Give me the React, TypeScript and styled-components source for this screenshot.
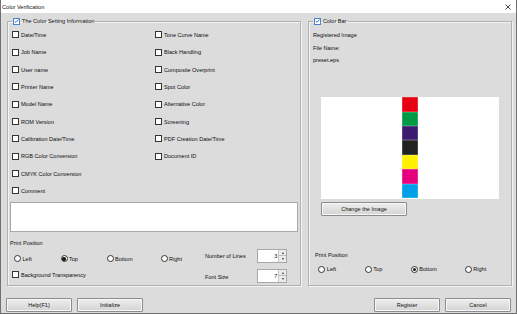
import React from 'react';
import styled, { createGlobalStyle } from 'styled-components';

const GlobalStyle = createGlobalStyle`
  html, body {
    margin: 0;
    padding: 0;
    background: #dcdcdc;
  }
  body {
    font-family: "Liberation Sans", Arial, sans-serif;
  }
`;

const Window = styled.div`
  width: 517px;
  height: 314px;
  box-sizing: border-box;
  border-left: 1px solid #707070;
  border-right: 1px solid #707070;
  border-bottom: 1px solid #707070;
  background: #dcdcdc;
  color: #0d0d0d;
  font-size: 5.55px;
  display: flex;
  flex-direction: column;
  overflow: hidden;
`;

const TitleBar = styled.div`
  flex: none;
  height: 13px;
  background: #ffffff;
  display: flex;
  align-items: center;
  justify-content: space-between;
  padding: 0 5px 0 1px;
  font-size: 5.6px;
  color: #111111;
`;

const Body = styled.div`
  flex: 1;
  display: flex;
  flex-direction: column;
  padding: 4px 4px 0 6px;
`;

const Panels = styled.div`
  display: flex;
  gap: 7px;
`;

const Group = styled.fieldset<{ $width: number }>`
  margin: 0;
  width: ${(p) => p.$width}px;
  height: 269px;
  box-sizing: border-box;
  min-width: 0;
  padding: 0 2px;
  border: 1px solid #b0b0b0;
  box-shadow: inset 1px 1px 0 #f4f4f4, 1px 1px 0 #f4f4f4;
  display: flex;
  flex-direction: column;
`;

const Legend = styled.legend`
  padding: 0 1px;
  margin-left: 2px;
  height: 8px;
  display: flex;
  align-items: center;
  gap: 2px;
`;

const Box = styled.span<{ $checked?: boolean }>`
  flex: none;
  width: 7px;
  height: 7px;
  box-sizing: border-box;
  border: 1px solid ${(p) => (p.$checked ? '#4a83d0' : '#333333')};
  background: #ffffff;
  display: flex;
  align-items: center;
  justify-content: center;
`;

const CheckItem = styled.label<{ $h?: number }>`
  display: flex;
  align-items: center;
  gap: 2px;
  height: ${(p) => p.$h ?? 10}px;
  white-space: nowrap;
`;

const CheckColumns = styled.div`
  display: flex;
  padding-left: 2px;
  margin-top: 1.3px;
`;

const CheckColumn = styled.div`
  width: 143px;
  display: flex;
  flex-direction: column;
`;

const Comment = styled.div`
  margin-top: 2px;
  width: 288px;
  height: 30px;
  box-sizing: border-box;
  background: #ffffff;
  border: 1px solid #a8a8a8;
`;

const Caption = styled.div<{ $mt: number; $ml?: number }>`
  height: 8px;
  line-height: 8px;
  margin-top: ${(p) => p.$mt}px;
  margin-left: ${(p) => p.$ml ?? 0}px;
  white-space: nowrap;
`;

const OptionsRow = styled.div`
  display: flex;
  align-items: flex-start;
`;

const LeftOptions = styled.div`
  width: 195px;
  display: flex;
  flex-direction: column;
`;

const RadioRow = styled.div<{ $mt: number; $ml: number }>`
  display: grid;
  grid-template-columns: 46.5px 46px 54px auto;
  margin-top: ${(p) => p.$mt}px;
  margin-left: ${(p) => p.$ml}px;
  height: 10px;
`;

const RadioItem = styled.label`
  display: flex;
  align-items: center;
  gap: 1.5px;
  white-space: nowrap;
`;

const RadioCircle = styled.span<{ $checked?: boolean }>`
  flex: none;
  width: 7px;
  height: 7px;
  box-sizing: border-box;
  border: 1px solid #333333;
  border-radius: 50%;
  background: #ffffff;
  display: flex;
  align-items: center;
  justify-content: center;
  &::after {
    content: '';
    width: 3.4px;
    height: 3.4px;
    border-radius: 50%;
    background: ${(p) => (p.$checked ? '#1a1a1a' : 'transparent')};
  }
`;

const RightOptions = styled.div`
  margin-top: 17.6px;
  display: flex;
  flex-direction: column;
  gap: 6.6px;
`;

const SpinRow = styled.div`
  display: flex;
  align-items: center;
  height: 13.4px;
`;

const SpinLabel = styled.span<{ $dy?: number }>`
  width: 51.7px;
  position: relative;
  top: ${(p) => p.$dy ?? 0}px;
`;

const Spin = styled.div`
  width: 30.6px;
  height: 13.4px;
  box-sizing: border-box;
  border: 1px solid #a8a8a8;
  background: #ffffff;
  display: flex;
  align-items: center;
  justify-content: flex-end;
`;

const SpinValue = styled.span`
  padding-right: 1px;
`;

const SpinArrows = styled.div`
  width: 7px;
  height: 100%;
  display: flex;
  flex-direction: column;
  border-left: 1px solid #c8c8c8;
`;

const SpinArrow = styled.div<{ $up?: boolean }>`
  flex: 1;
  background: #ececec;
  border-bottom: ${(p) => (p.$up ? '1px solid #bdbdbd' : 'none')};
  display: flex;
  align-items: center;
  justify-content: center;
  &::after {
    content: '';
    border-left: 1.5px solid transparent;
    border-right: 1.5px solid transparent;
    ${(p) =>
      p.$up ? 'border-bottom: 2px solid #333;' : 'border-top: 2px solid #333;'}
  }
`;

const InfoText = styled.div<{ $mt: number }>`
  height: 8px;
  line-height: 8px;
  margin-top: ${(p) => p.$mt}px;
  margin-left: 2px;
`;

const ImageArea = styled.div`
  margin: 32.7px 0 0 10px;
  width: 178px;
  height: 102.3px;
  background: #ffffff;
  display: flex;
  justify-content: center;
  padding-top: 0.6px;
  box-sizing: border-box;
`;

const ColorStrip = styled.div`
  width: 15.3px;
  display: flex;
  flex-direction: column;
`;

const Swatch = styled.div<{ $color: string }>`
  height: 14.4px;
  background: ${(p) => p.$color};
  box-shadow: inset 0 0 0 0.5px rgba(255, 255, 255, 0.35);
`;

const Button = styled.button<{ $width?: number }>`
  width: ${(p) => p.$width ?? 66}px;
  height: 14px;
  padding: 0;
  box-sizing: border-box;
  font-family: inherit;
  font-size: 5.55px;
  color: #111111;
  border: 1px solid #8c8c8c;
  border-radius: 1px;
  background: linear-gradient(#eeeeee, #d4d4d4);
  box-shadow: inset 0 0 0 1px #f7f7f7;
`;

const ChangeButton = styled(Button)`
  margin: 3.3px 0 0 10px;
  height: 13.7px;
`;

const Footer = styled.div`
  display: flex;
  justify-content: space-between;
  margin: 12px 1px 0 -1px;
`;

const ButtonGroup = styled.div`
  display: flex;
  gap: 5px;
`;

const Check = ({ checked }: { checked?: boolean }) => (
  <Box $checked={checked}>
    {checked && (
      <svg width="6" height="6" viewBox="0 0 6 6">
        <path d="M0.8 3.1 L2.4 4.7 L5.3 1.2" fill="none" stroke="#1f6fd0" strokeWidth="1.1" />
      </svg>
    )}
  </Box>
);

const CheckRow = ({ label, h }: { label: string; h?: number }) => (
  <CheckItem $h={h}>
    <Check />
    <span>{label}</span>
  </CheckItem>
);

const Radios = ({ selected, mt, ml }: { selected: string; mt: number; ml: number }) => (
  <RadioRow $mt={mt} $ml={ml}>
    {['Left', 'Top', 'Bottom', 'Right'].map((p) => (
      <RadioItem key={p}>
        <RadioCircle $checked={p === selected} />
        <span>{p}</span>
      </RadioItem>
    ))}
  </RadioRow>
);

const leftItems = [
  'Date/Time',
  'Job Name',
  'User name',
  'Printer Name',
  'Model Name',
  'ROM Version',
  'Calibration Date/Time',
  'RGB Color Conversion',
  'CMYK Color Conversion',
  'Comment',
];

const rightItems = [
  'Tone Curve Name',
  'Black Handling',
  'Composite Overprint',
  'Spot Color',
  'Alternative Color',
  'Screening',
  'PDF Creation Date/Time',
  'Document ID',
];

const swatches = ['#e60012', '#009944', '#3b1a70', '#222222', '#fff100', '#e4007f', '#00a0e9'];

export default function App() {
  return (
    <>
      <GlobalStyle />
      <Window>
        <TitleBar>
          <span>Color Verification</span>
          <svg width="6" height="6" viewBox="0 0 6 6">
            <path d="M0.5 0.5 L5.5 5.5 M5.5 0.5 L0.5 5.5" stroke="#333" strokeWidth="0.9" />
          </svg>
        </TitleBar>
        <Body>
          <Panels>
            <Group $width={294}>
              <Legend>
                <Check checked />
                <span>The Color Setting Information</span>
              </Legend>
              <CheckColumns>
                <CheckColumn>
                  {leftItems.map((l) => (
                    <CheckRow key={l} label={l} h={17.33} />
                  ))}
                </CheckColumn>
                <CheckColumn>
                  {rightItems.map((l) => (
                    <CheckRow key={l} label={l} h={17.33} />
                  ))}
                </CheckColumn>
              </CheckColumns>
              <Comment />
              <OptionsRow>
                <LeftOptions>
                  <Caption $mt={7.6}>Print Position</Caption>
                  <Radios selected="Top" mt={6.7} ml={4} />
                  <CheckItem style={{ marginTop: 6, marginLeft: 2 }}>
                    <Check />
                    <span>Background Transparency</span>
                  </CheckItem>
                </LeftOptions>
                <RightOptions>
                  <SpinRow>
                    <SpinLabel>Number of Lines</SpinLabel>
                    <Spin>
                      <SpinValue>3</SpinValue>
                      <SpinArrows>
                        <SpinArrow $up />
                        <SpinArrow />
                      </SpinArrows>
                    </Spin>
                  </SpinRow>
                  <SpinRow>
                    <SpinLabel $dy={1}>Font Size</SpinLabel>
                    <Spin>
                      <SpinValue>7</SpinValue>
                      <SpinArrows>
                        <SpinArrow $up />
                        <SpinArrow />
                      </SpinArrows>
                    </Spin>
                  </SpinRow>
                </RightOptions>
              </OptionsRow>
            </Group>
            <Group $width={204}>
              <Legend>
                <Check checked />
                <span>Color Bar</span>
              </Legend>
              <InfoText $mt={6}>Registered Image</InfoText>
              <InfoText $mt={5.3}>File Name:</InfoText>
              <InfoText $mt={3.7}>preset.eps</InfoText>
              <ImageArea>
                <ColorStrip>
                  {swatches.map((c) => (
                    <Swatch key={c} $color={c} />
                  ))}
                </ColorStrip>
              </ImageArea>
              <ChangeButton $width={86}>Change the Image</ChangeButton>
              <Caption $mt={35} $ml={4}>Print Position</Caption>
              <Radios selected="Bottom" mt={5.3} ml={7.3} />
            </Group>
          </Panels>
          <Footer>
            <ButtonGroup>
              <Button>Help(F1)</Button>
              <Button>Initialize</Button>
            </ButtonGroup>
            <ButtonGroup>
              <Button>Register</Button>
              <Button>Cancel</Button>
            </ButtonGroup>
          </Footer>
        </Body>
      </Window>
    </>
  );
}
